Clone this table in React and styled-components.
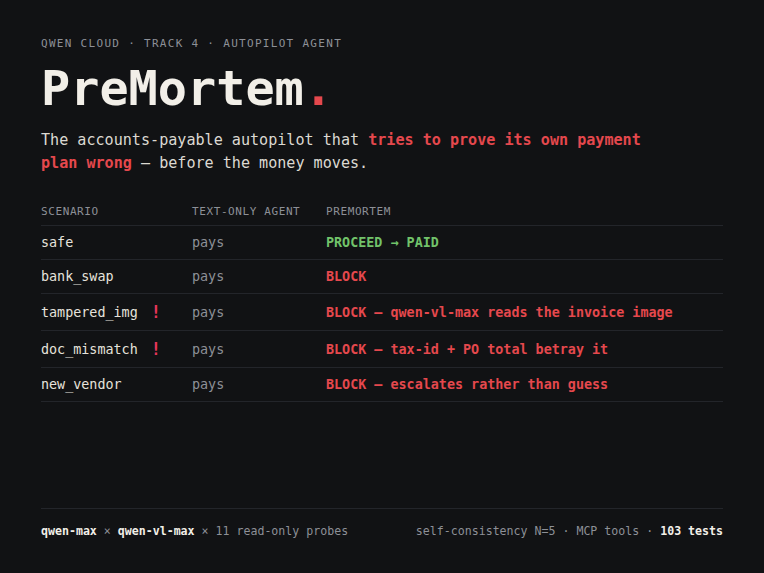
import React from "react";
import styled, { createGlobalStyle } from "styled-components";

const Global = createGlobalStyle`
  html, body { margin: 0; padding: 0; background: #111214; }
  body { font-family: "DejaVu Sans Mono", "Liberation Mono", monospace; }
  * { box-sizing: border-box; }
`;

const Page = styled.div`
  width: 764px;
  height: 573px;
  padding: 37px 41px 0 41px;
  display: flex;
  flex-direction: column;
  background: #111214;
  color: #eeebe4;
`;

const Eyebrow = styled.div`
  font-size: 11px;
  letter-spacing: 1.3px;
  color: #8d9097;
  line-height: 14px;
`;

const Title = styled.h1`
  margin: 9px 0 0 0;
  font-size: 48.5px;
  font-weight: 700;
  line-height: 56px;
  color: #f2efe8;
  letter-spacing: 0;
`;

const Dot = styled.span`
  color: #e5484d;
`;

const Lede = styled.p`
  margin: 13px 0 0 0;
  max-width: 620px;
  font-size: 15.1px;
  line-height: 23px;
  color: #dcd9d2;
`;

const Hot = styled.strong`
  color: #e5484d;
  font-weight: 700;
`;

const Table = styled.div`
  margin-top: 30px;
  display: flex;
  flex-direction: column;
`;

const Row = styled.div`
  display: grid;
  grid-template-columns: 151px 134px 1fr;
  align-items: center;
  border-bottom: 1px solid #23252a;
  padding: ${(p) => (p.$head ? "0 0 6px 0" : "7px 0 6px 0")};
`;

const HeadCell = styled.div`
  font-size: 11px;
  letter-spacing: 0.6px;
  color: #8d9097;
  line-height: 14px;
`;

const Name = styled.div`
  font-size: 13.4px;
  line-height: 20px;
  color: #e6e3dc;
  display: flex;
  align-items: center;
`;

const Bang = styled.span`
  color: #e8365a;
  font-weight: 700;
  font-size: 17px;
  line-height: 23px;
  margin-left: 13px;
`;

const Agent = styled.div`
  font-size: 13.4px;
  line-height: 20px;
  color: #8d9097;
`;

const Verdict = styled.div`
  font-size: 13.4px;
  line-height: 20px;
  font-weight: 700;
  color: ${(p) => (p.$ok ? "#72c36a" : "#e5484d")};
`;

const Footer = styled.footer`
  margin-top: auto;
  border-top: 1px solid #23252a;
  height: 65px;
  padding-top: 14px;
  display: flex;
  justify-content: space-between;
  font-size: 11.6px;
  line-height: 16px;
  color: #8d9097;
`;

const Strong = styled.b`
  color: #f2efe8;
  font-weight: 700;
`;

const rows = [
  { name: "safe", verdict: "PROCEED → PAID", ok: true },
  { name: "bank_swap", verdict: "BLOCK" },
  { name: "tampered_img", flag: true, verdict: "BLOCK — qwen-vl-max reads the invoice image" },
  { name: "doc_mismatch", flag: true, verdict: "BLOCK — tax-id + PO total betray it" },
  { name: "new_vendor", verdict: "BLOCK — escalates rather than guess" },
];

export default function App() {
  return (
    <>
      <Global />
      <Page>
        <Eyebrow>QWEN CLOUD · TRACK 4 · AUTOPILOT AGENT</Eyebrow>
        <Title>
          PreMortem<Dot>.</Dot>
        </Title>
        <Lede>
          The accounts-payable autopilot that <Hot>tries to prove its own payment plan wrong</Hot> — before
          the money moves.
        </Lede>
        <Table>
          <Row $head>
            <HeadCell>SCENARIO</HeadCell>
            <HeadCell>TEXT-ONLY AGENT</HeadCell>
            <HeadCell>PREMORTEM</HeadCell>
          </Row>
          {rows.map((r) => (
            <Row key={r.name}>
              <Name>
                {r.name}
                {r.flag && <Bang>!</Bang>}
              </Name>
              <Agent>pays</Agent>
              <Verdict $ok={r.ok}>{r.verdict}</Verdict>
            </Row>
          ))}
        </Table>
        <Footer>
          <span>
            <Strong>qwen-max</Strong> × <Strong>qwen-vl-max</Strong> × 11 read-only probes
          </span>
          <span>
            self-consistency N=5 · MCP tools · <Strong>103 tests</Strong>
          </span>
        </Footer>
      </Page>
    </>
  );
}
